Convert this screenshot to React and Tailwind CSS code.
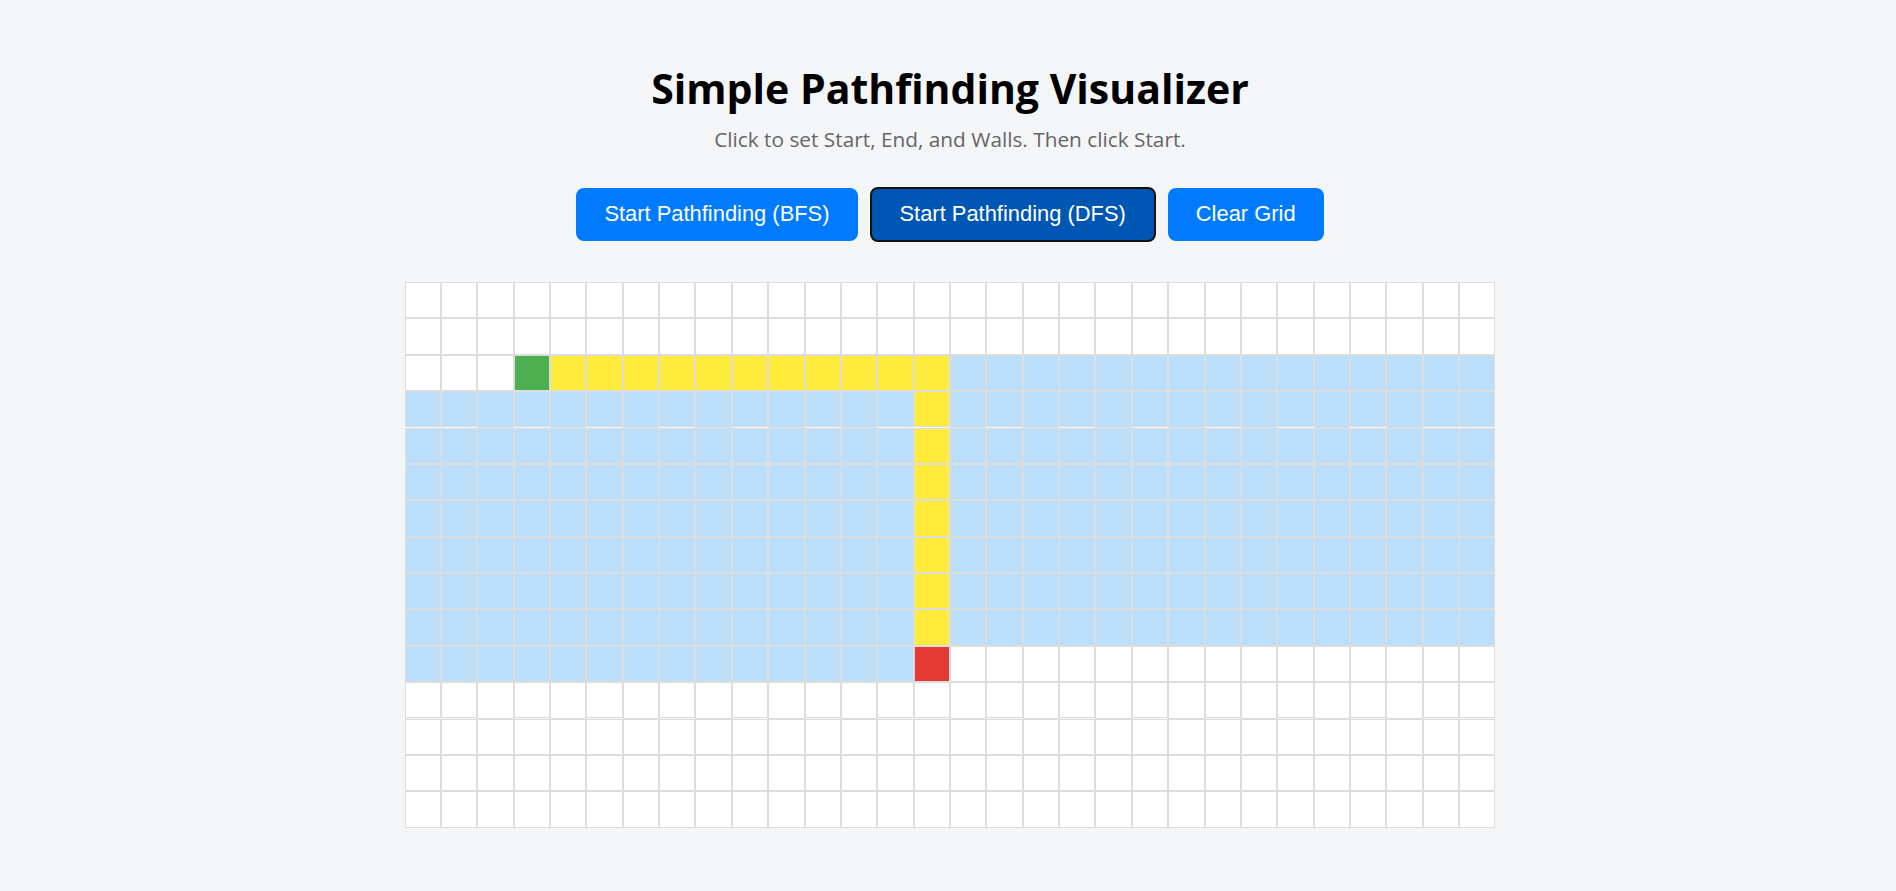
import { useState } from 'react';

const ROWS = 15;
const COLS = 30;

// snapshot of a finished DFS run
function cellType(r, c) {
  if (r === 2 && c === 3) return 'start';
  if (r === 10 && c === 14) return 'end';
  if (r === 2 && c >= 4 && c <= 14) return 'path';
  if (c === 14 && r >= 3 && r <= 9) return 'path';
  if (r >= 3 && r <= 9) return 'visited';
  if (r === 2 && c >= 15) return 'visited';
  if (r === 10 && c < 14) return 'visited';
  return 'empty';
}

const cellColors = {
  start: 'bg-[#4caf50]',
  end: 'bg-[#e53935]',
  path: 'bg-[#ffeb3b]',
  visited: 'bg-[#bbdefb]',
  wall: 'bg-[#333333]',
  empty: 'bg-white',
};

function Cell({ type }) {
  return <div className={`aspect-square border border-[#dddddd] ${cellColors[type]}`} />;
}

export default function App() {
  const [algo, setAlgo] = useState('dfs');

  const cells = [];
  for (let r = 0; r < ROWS; r++) {
    for (let c = 0; c < COLS; c++) {
      cells.push(<Cell key={`${r}-${c}`} type={cellType(r, c)} />);
    }
  }

  return (
    <div className="min-h-screen bg-[#f4f5f7] flex flex-col items-center pl-[4px] pt-[62px]">
      <h1 className="text-[41px] leading-[52px] font-bold text-black font-['Open_Sans',sans-serif]">
        Simple Pathfinding Visualizer
      </h1>
      <p className="mt-[12px] text-[20.8px] leading-[26px] text-[#666666] font-['Open_Sans',sans-serif]">
        Click to set Start, End, and Walls. Then click Start.
      </p>

      <div className="mt-[35px] flex items-center gap-[12px] font-['Liberation_Sans',Arial,sans-serif] text-[21.9px]">
        <button
          onClick={() => setAlgo('bfs')}
          className={`h-[53px] px-[26px] rounded-[8px] text-white ${
            algo === 'bfs' ? 'bg-[#0056b3] border-2 border-[#111111]' : 'bg-[#007bff] border-2 border-transparent'
          }`}
        >
          Start Pathfinding (BFS)
        </button>
        <button
          onClick={() => setAlgo('dfs')}
          className={`h-[55px] px-[28px] rounded-[8px] text-white ${
            algo === 'dfs' ? 'bg-[#0056b3] border-2 border-[#111111]' : 'bg-[#007bff] border-2 border-transparent'
          }`}
        >
          Start Pathfinding (DFS)
        </button>
        <button className="h-[53px] px-[28px] rounded-[8px] text-white bg-[#007bff]">Clear Grid</button>
      </div>

      <div className="mt-[40px] w-[1091px] grid grid-cols-[repeat(30,minmax(0,1fr))]">{cells}</div>
    </div>
  );
}
